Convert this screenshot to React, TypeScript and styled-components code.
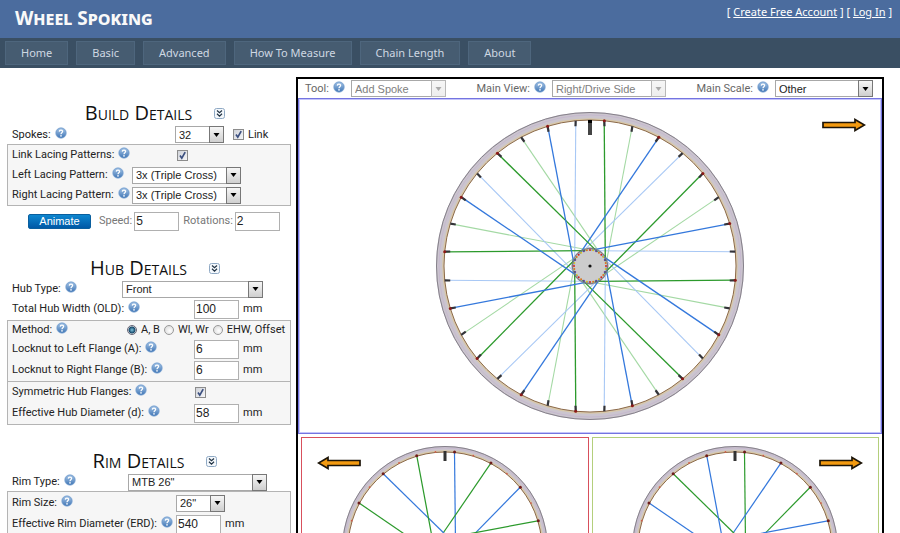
import React, { useId } from "react";
import styled, { createGlobalStyle } from "styled-components";

const UI = 'Roboto, "Noto Sans", sans-serif';
const HEADING = '"Open Sans", "Noto Sans", sans-serif';
const TITLE = '"Noto Sans", "Open Sans", sans-serif';
const FIELD = '"Liberation Sans", Arial, sans-serif';

const GlobalStyle = createGlobalStyle`
  *, *::before, *::after { box-sizing: border-box; }
  body { margin: 0; background: #fff; color: #222; font: 11px/16px ${UI}; }
  button, input, select { margin: 0; padding: 0; font-family: ${FIELD}; }
`;

/* ---------- page chrome ---------- */

const Header = styled.header`
  display: flex;
  justify-content: space-between;
  height: 38px;
  padding: 0 8px 0 15px;
  background: #4b6c9e;
  color: #fff;
`;

const SiteTitle = styled.h1`
  margin: 0;
  font: small-caps 700 19px/36px ${TITLE};
  color: #f9f9f9;
`;

const Account = styled.div`
  font: 11px/24px ${TITLE};
  color: #fff;
  a { color: inherit; }
`;

const Nav = styled.nav`
  display: flex;
  gap: 8px;
  padding: 3px 5px;
  background: #3a4f63;
`;

const NavLink = styled.a`
  padding: 0 15px;
  border: 1px solid #4e667d;
  background: #465c71;
  color: #cfd8e2;
  font: 11px/22px ${TITLE};
  text-decoration: none;
  white-space: nowrap;
`;

const Page = styled.main`
  display: flex;
  align-items: flex-start;
  gap: 5px;
  padding: 9px 16px 16px 7px;
`;

const Sidebar = styled.form`
  flex: 0 0 284px;
  min-width: 0;
`;

/* ---------- form parts ---------- */

const SectionHead = styled.div`
  display: flex;
  align-items: center;
  justify-content: center;
  gap: 22px;
  height: 24px;
  padding-left: 12px;
`;

const SectionTitle = styled.h2`
  margin: 0;
  font: small-caps 400 20px/22px ${HEADING};
  color: #111;
  white-space: nowrap;
`;

const Section = styled.section<{ $tight?: boolean }>`
  padding-top: ${(p) => (p.$tight ? 20 : 24)}px;
`;

const CollapseButton = styled.button`
  display: flex;
  width: 11px;
  height: 11px;
  border: 0;
  background: none;
`;

const HelpButton = styled.button`
  display: flex;
  width: 12px;
  height: 12px;
  margin: 0 0 4px 4px;
  border: 0;
  background: none;
`;

const Row = styled.div<{ $h?: number; $inset?: boolean }>`
  display: flex;
  align-items: center;
  height: ${(p) => p.$h ?? 20}px;
  padding-left: ${(p) => (p.$inset ? 4 : 5)}px;
`;

const LabelCell = styled.div<{ $w: number }>`
  display: flex;
  align-items: center;
  flex: 0 0 ${(p) => p.$w}px;
  white-space: nowrap;
  line-height: 18px;
`;

const Group = styled.div<{ $joined?: boolean }>`
  border: 1px solid #b4b4b4;
  border-top-width: ${(p) => (p.$joined ? 0 : 1)}px;
  background: #f6f6f6;
`;

const TextInput = styled.input`
  width: 45px;
  height: 19px;
  padding: 0 1px;
  border: 1px solid #b0b0b0;
  background: #fff;
  color: #222;
  font-size: 12px;
`;

const Unit = styled.span`
  margin-left: 4px;
`;

const Choices = styled.div`
  display: flex;
  align-items: center;
  white-space: nowrap;
`;

const ChoiceLabel = styled.label`
  margin: 0 4px;
`;

const LinkChoice = styled(Choices)`
  margin-left: 9px;
`;

const Radio = styled.input`
  appearance: none;
  width: 10px;
  height: 10px;
  border: 1px solid #999;
  border-radius: 50%;
  background: radial-gradient(circle at 60% 60%, #fff, #d4d4d4);
  &:checked {
    border-color: #667;
    background: radial-gradient(circle, #7fc4de 0, #16486a 3px, #eee 4px);
  }
`;

const TickWrap = styled.span`
  position: relative;
  display: inline-flex;
  svg { position: absolute; left: 0; top: 0; pointer-events: none; }
`;

const TickBox = styled.input`
  appearance: none;
  width: 11px;
  height: 11px;
  border: 1px solid #8c8c8c;
  background: linear-gradient(135deg, #cfd2d8, #f6f6f8);
  & + svg { visibility: hidden; }
  &:checked + svg { visibility: visible; }
`;

const AnimateRow = styled.div`
  display: flex;
  align-items: center;
  height: 30px;
  padding-left: 21px;
  color: #777;
  label { margin: 0 2px 0 8px; }
  input + label { margin-left: 4px; }
`;

const AnimateButton = styled.button`
  width: 63px;
  height: 15px;
  border: 1px solid #0a5f9e;
  border-radius: 2px;
  background: linear-gradient(#0d86cf, #0058a6);
  color: #fff;
  font-size: 11px;
  line-height: 12px;
`;

const SelectWrap = styled.span<{ $w: number }>`
  position: relative;
  display: inline-flex;
  width: ${(p) => p.$w}px;
  height: 17px;
`;

const SelectField = styled.select`
  appearance: none;
  width: 100%;
  height: 100%;
  padding: 0 16px 0 3px;
  border: 1px solid #a8a8a8;
  border-radius: 0;
  background: #fff;
  color: #222;
  font-size: 11px;
  opacity: 1;
  &:disabled { color: #808080; }
`;

const SelectArrow = styled.span<{ $off?: boolean }>`
  position: absolute;
  top: 0;
  right: 0;
  display: flex;
  align-items: center;
  justify-content: center;
  width: 15px;
  height: 17px;
  border: 1px solid ${(p) => (p.$off ? "#b8b8b8" : "#777")};
  background: linear-gradient(#f6f6f6, ${(p) => (p.$off ? "#eee" : "#cfcfcf")});
  color: ${(p) => (p.$off ? "#aaa" : "#000")};
  pointer-events: none;
`;

/* ---------- workspace parts ---------- */

const Workspace = styled.section`
  flex: 1;
  min-width: 0;
  border: 2px solid #000;
`;

const Toolbar = styled.div`
  display: flex;
  justify-content: space-between;
  height: 19px;
  padding: 0 9px 0 7px;
  color: #666;
`;

const Tool = styled.div`
  display: flex;
  align-items: center;
  white-space: nowrap;
  button { margin-right: 6px; }
`;

const View = styled.div<{ $color: string }>`
  position: relative;
  display: flex;
  justify-content: center;
  border: 1px solid ${(p) => p.$color};
  min-width: 0;
`;

const MainView = styled(View)`
  padding: 12px 0;
  box-shadow: inset 0 0 0 1px #c4c4fa;
`;

const SideViews = styled.div`
  display: grid;
  grid-template-columns: 1fr 1fr;
  gap: 3px;
  padding: 3px;
`;

const SideView = styled(View)`
  padding: 7px 0;
`;

const Direction = styled.span<{ $side: "left" | "right"; $top: number }>`
  position: absolute;
  top: ${(p) => p.$top}px;
  ${(p) => p.$side}: 15px;
  display: flex;
  svg { transform: ${(p) => (p.$side === "left" ? "scaleX(-1)" : "none")}; }
`;

/* ---------- drawings ---------- */

function Help({ topic }: { topic: string }) {
  const id = useId();
  return (
    <HelpButton type="button" aria-label={`Help: ${topic}`}>
      <svg width="12" height="12" viewBox="0 0 12 12">
        <defs>
          <linearGradient id={id} x1="0" y1="0" x2="0" y2="1">
            <stop offset="0" stopColor="#a9c8e8" />
            <stop offset="1" stopColor="#3f75b5" />
          </linearGradient>
        </defs>
        <circle cx="6" cy="6" r="5.8" fill="#b7cde6" />
        <circle cx="6" cy="6" r="4.9" fill={`url(#${id})`} stroke="#5e8dc4" strokeWidth="0.6" />
        <path d="M4.3 4.6C4.4 2.5 7.7 2.6 7.6 4.6 7.6 5.8 6 5.8 6 7.2" fill="none" stroke="#fff" strokeWidth="1.3" />
        <circle cx="6" cy="8.9" r="0.8" fill="#fff" />
      </svg>
    </HelpButton>
  );
}

function Chevrons() {
  return (
    <svg width="11" height="11" viewBox="0 0 11 11" fill="none">
      <rect x="0.5" y="0.5" width="10" height="10" rx="2" fill="#f4f8fc" stroke="#8fa9c4" />
      <path d="M3 2.5 5.5 4.8 8 2.5M3 5.8 5.5 8.2 8 5.8" stroke="#234" strokeWidth="1.2" />
    </svg>
  );
}

function ArrowMark() {
  return (
    <svg width="44" height="14" viewBox="0 0 44 14">
      <path d="M1 4.5H33V1.5L42.5 7 33 12.5V9.5H1Z" fill="#f39a10" stroke="#1c1408" strokeWidth="1.7" />
    </svg>
  );
}

const GREEN = "#2c9a2c";
const BLUE = "#3478dc";
const PALE_GREEN = "#a4d9a4";
const PALE_BLUE = "#a8c8f5";
const STEP = 360 / 32;

const at = (deg: number, r: number) => {
  const a = (deg * Math.PI) / 180;
  return { x: r * Math.sin(a), y: -r * Math.cos(a) };
};

function Spoke({ k, color, rim, hub, width }: { k: number; color: string; rim: number; hub: number; width: number }) {
  const deg = STEP / 2 + k * STEP;
  const clockwise = k % 4 < 2;
  const a = at(deg, rim);
  const b = at(deg + (clockwise ? 67.5 : -67.5), hub);
  return <line x1={a.x} y1={a.y} x2={b.x} y2={b.y} stroke={color} strokeWidth={width} />;
}

const ALL = Array.from({ length: 32 }, (_, k) => k);
const NEAR = ALL.filter((k) => k % 2 === 0);
const FAR = ALL.filter((k) => k % 2 === 1);
const HOLES = ["#d02020", "#e0c020", "#6a3a9a", "#e07020"];

function Rim({ r, inner }: { r: number; inner: number }) {
  const mid = (r + inner) / 2;
  return (
    <g fill="none">
      <circle r={mid} stroke="#cbc5ce" strokeWidth={r - inner} />
      <circle r={mid + 1} stroke="#c6b9cf" strokeWidth="1" />
      <circle r={r - 0.5} stroke="#85808a" strokeWidth="1" />
      <circle r={inner + 1} stroke="#d8c8a8" strokeWidth="1.5" />
      <circle r={inner} stroke="#8d6a48" strokeWidth="1" />
    </g>
  );
}

function MainWheel() {
  return (
    <svg width="310" height="310" viewBox="-155 -155 310 310" role="img" aria-label="Wheel, drive side">
      <Rim r={154} inner={146} />
      <circle r="18" fill="#ccc" stroke="#77717c" />
      {FAR.map((k) => (
        <Spoke key={k} k={k} color={k % 4 === 1 ? PALE_GREEN : PALE_BLUE} rim={145} hub={16} width={1.1} />
      ))}
      {NEAR.map((k) => (
        <Spoke key={k} k={k} color={k % 4 === 0 ? GREEN : BLUE} rim={145} hub={16} width={1.3} />
      ))}
      <circle r="15" fill="#ccc" />
      <circle r="17.5" fill="none" stroke="#7d7784" strokeWidth="1" />
      {ALL.map((k) => {
        const p = at(k * STEP, 16);
        return <circle key={k} cx={p.x} cy={p.y} r="1" fill={HOLES[k % 4]} />;
      })}
      <circle r="1.6" fill="#111" />
      {ALL.map((k) => {
        const deg = STEP / 2 + k * STEP;
        const a = at(deg, 146);
        const b = at(deg + (k % 4 < 2 ? 0.3 : -0.3), 140.5);
        return (
          <g key={k}>
            <line x1={a.x} y1={a.y} x2={b.x} y2={b.y} stroke="#333338" strokeWidth="2.2" />
            {k % 2 === 0 && <circle cx={a.x} cy={a.y} r="1.5" fill="#8c1818" />}
          </g>
        );
      })}
      <rect x="-2" y="-146" width="4" height="15" fill="#444" />
      <rect x="-2" y="-146" width="4" height="3" fill="#000" />
    </svg>
  );
}

function SideWheel({ first, second, label }: { first: string; second: string; label: string }) {
  return (
    <svg width="208" height="208" viewBox="-104 -104 208 208" role="img" aria-label={label}>
      <Rim r={103} inner={97} />
      {NEAR.map((k) => (
        <Spoke key={k} k={k} color={k % 4 === 0 ? first : second} rim={97} hub={11} width={1.2} />
      ))}
      <circle r="12" fill="#ccc" stroke="#77717c" />
      <circle r="1.2" fill="#111" />
      {ALL.map((k) => {
        const p = at(STEP / 2 + k * STEP, 97.5);
        const near = k % 2 === 0;
        return <circle key={k} cx={p.x} cy={p.y} r={near ? 1.5 : 0.9} fill={near ? "#6e1c1c" : "#d05a48"} />;
      })}
      <rect x="-1.5" y="-98" width="3" height="10" fill="#333" />
    </svg>
  );
}

/* ---------- controls ---------- */

type PickProps = { id: string; value: string; w: number; options?: string[]; disabled?: boolean };

function Pick({ id, value, w, options = [], disabled }: PickProps) {
  return (
    <SelectWrap $w={w}>
      <SelectField id={id} defaultValue={value} disabled={disabled}>
        {[value, ...options].map((o) => (
          <option key={o}>{o}</option>
        ))}
      </SelectField>
      <SelectArrow $off={disabled}>
        <svg width="7" height="4" viewBox="0 0 7 4">
          <path d="M0.5 0H6.5L3.5 4Z" fill="currentColor" />
        </svg>
      </SelectArrow>
    </SelectWrap>
  );
}

function Tick({ id }: { id: string }) {
  return (
    <TickWrap>
      <TickBox type="checkbox" id={id} defaultChecked />
      <svg width="11" height="11" viewBox="0 0 11 11">
        <path d="M3 5.5 4.8 8.2 8.2 2.2" fill="none" stroke="#3c5080" strokeWidth="1.7" />
      </svg>
    </TickWrap>
  );
}

type FieldProps = { id?: string; label: string; w: number; h?: number; inset?: boolean; children: React.ReactNode };

function Field({ id, label, w, h, inset, children }: FieldProps) {
  return (
    <Row $h={h} $inset={inset}>
      <LabelCell $w={w}>
        {id ? <label htmlFor={id}>{label}:</label> : <span>{label}:</span>}
        <Help topic={label} />
      </LabelCell>
      {children}
    </Row>
  );
}

type MeasureProps = { id: string; label: string; value: string; w: number; h?: number; inset?: boolean };

function Measure({ value, ...field }: MeasureProps) {
  return (
    <Field {...field}>
      <TextInput id={field.id} defaultValue={value} />
      <Unit>mm</Unit>
    </Field>
  );
}

function Head({ title }: { title: string }) {
  return (
    <SectionHead>
      <SectionTitle>{title}</SectionTitle>
      <CollapseButton type="button" aria-label={`Collapse ${title}`}>
        <Chevrons />
      </CollapseButton>
    </SectionHead>
  );
}

const NAV = ["Home", "Basic", "Advanced", "How To Measure", "Chain Length", "About"];

export default function App() {
  return (
    <>
      <GlobalStyle />
      <Header>
        <SiteTitle>Wheel Spoking</SiteTitle>
        <Account>
          [ <a href="#register">Create Free Account</a> ] [ <a href="#login">Log In</a> ]
        </Account>
      </Header>
      <Nav>
        {NAV.map((n) => (
          <NavLink key={n} href="#">
            {n}
          </NavLink>
        ))}
      </Nav>
      <Page>
        <Sidebar onSubmit={(e) => e.preventDefault()}>
          <Section>
            <Head title="Build Details" />
            <Field id="spokes" label="Spokes" w={163} h={19}>
              <Pick id="spokes" value="32" w={49} options={["36"]} />
              <LinkChoice>
                <Tick id="link" />
                <ChoiceLabel htmlFor="link">Link</ChoiceLabel>
              </LinkChoice>
            </Field>
            <Group>
              <Field id="linkLacing" label="Link Lacing Patterns" w={165} inset>
                <Tick id="linkLacing" />
              </Field>
              <Field id="leftLacing" label="Left Lacing Pattern" w={120} inset>
                <Pick id="leftLacing" value="3x (Triple Cross)" w={109} />
              </Field>
              <Field id="rightLacing" label="Right Lacing Pattern" w={120} inset>
                <Pick id="rightLacing" value="3x (Triple Cross)" w={109} />
              </Field>
            </Group>
            <AnimateRow>
              <AnimateButton type="button">Animate</AnimateButton>
              <label htmlFor="speed">Speed:</label>
              <TextInput id="speed" defaultValue="5" />
              <label htmlFor="rotations">Rotations:</label>
              <TextInput id="rotations" defaultValue="2" />
            </AnimateRow>
          </Section>

          <Section $tight>
            <Head title="Hub Details" />
            <Field id="hubType" label="Hub Type" w={110} h={18}>
              <Pick id="hubType" value="Front" w={141} options={["Rear"]} />
            </Field>
            <Measure id="old" label="Total Hub Width (OLD)" value="100" w={182} h={22} />
            <Group>
              <Field label="Method" w={115} h={18} inset>
                <Choices role="radiogroup" aria-label="Method">
                  <Radio type="radio" name="method" id="mAB" defaultChecked />
                  <ChoiceLabel htmlFor="mAB">A, B</ChoiceLabel>
                  <Radio type="radio" name="method" id="mW" />
                  <ChoiceLabel htmlFor="mW">Wl, Wr</ChoiceLabel>
                  <Radio type="radio" name="method" id="mE" />
                  <ChoiceLabel htmlFor="mE">EHW, Offset</ChoiceLabel>
                </Choices>
              </Field>
              <Measure id="flangeA" label="Locknut to Left Flange (A)" value="6" w={182} h={20} inset />
              <Measure id="flangeB" label="Locknut to Right Flange (B)" value="6" w={182} h={22} inset />
            </Group>
            <Group $joined>
              <Field id="symmetric" label="Symmetric Hub Flanges" w={183} h={20} inset>
                <Tick id="symmetric" />
              </Field>
              <Measure id="hubD" label="Effective Hub Diameter (d)" value="58" w={182} h={22} inset />
            </Group>
          </Section>

          <Section>
            <Head title="Rim Details" />
            <Field id="rimType" label="Rim Type" w={116} h={18}>
              <Pick id="rimType" value={'MTB 26"'} w={139} />
            </Field>
            <Group>
              <Field id="rimSize" label="Rim Size" w={164} h={22} inset>
                <Pick id="rimSize" value={'26"'} w={49} />
              </Field>
              <Measure id="erd" label="Effective Rim Diameter (ERD)" value="540" w={164} h={20} inset />
            </Group>
          </Section>
        </Sidebar>

        <Workspace>
          <Toolbar>
            <Tool>
              <label htmlFor="tool">Tool:</label>
              <Help topic="Tool" />
              <Pick id="tool" value="Add Spoke" w={95} disabled />
            </Tool>
            <Tool>
              <label htmlFor="view">Main View:</label>
              <Help topic="Main View" />
              <Pick id="view" value="Right/Drive Side" w={114} disabled />
            </Tool>
            <Tool>
              <label htmlFor="scale">Main Scale:</label>
              <Help topic="Main Scale" />
              <Pick id="scale" value="Other" w={98} />
            </Tool>
          </Toolbar>
          <MainView $color="#7474e0">
            <MainWheel />
            <Direction $side="right" $top={19}>
              <ArrowMark />
            </Direction>
          </MainView>
          <SideViews>
            <SideView $color="#d8505c">
              <SideWheel first={BLUE} second={GREEN} label="Wheel, left side" />
              <Direction $side="left" $top={18}>
                <ArrowMark />
              </Direction>
            </SideView>
            <SideView $color="#b4cf7c">
              <SideWheel first={GREEN} second={BLUE} label="Wheel, right side" />
              <Direction $side="right" $top={18}>
                <ArrowMark />
              </Direction>
            </SideView>
          </SideViews>
        </Workspace>
      </Page>
    </>
  );
}
